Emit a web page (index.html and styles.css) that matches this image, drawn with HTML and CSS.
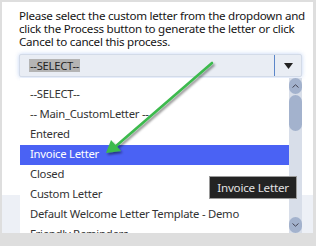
FILE: index.html
```html
<!DOCTYPE html>
<html>
<head>
<meta charset="utf-8">
<link rel="stylesheet" href="styles.css">
</head>
<body>
<div class="panel">
  <div class="content">
    <p class="msg">Please select the custom letter from the dropdown and click the Process button to generate the letter or click Cancel to cancel this process.</p>
    <div class="select">
      <span class="value">--SELECT--</span>
      <span class="btn"><svg width="9" height="6" viewBox="0 0 9 6"><path d="M0 0 H9 L4.5 6 Z" fill="#222"/></svg></span>
    </div>
  </div>
  <div class="footer"></div>

  <div class="list">
    <ul class="options">
      <li>--SELECT--</li>
      <li>-- Main_CustomLetter --</li>
      <li>Entered</li>
      <li class="active">Invoice Letter</li>
      <li>Closed</li>
      <li>Custom Letter</li>
      <li>Default Welcome Letter Template - Demo</li>
      <li>Friendly Reminders</li>
    </ul>
    <div class="scroll">
      <span class="sbtn up"><svg width="7" height="4" viewBox="0 0 7 4"><path d="M0.5 3.5 L3.5 0.8 L6.5 3.5" fill="none" stroke="#445" stroke-width="1"/></svg></span>
      <span class="thumb"></span>
      <span class="track"></span>
      <span class="sbtn down"><svg width="7" height="4" viewBox="0 0 7 4"><path d="M0.5 0.5 L3.5 3.2 L6.5 0.5" fill="none" stroke="#445" stroke-width="1"/></svg></span>
    </div>
  </div>

  <div class="tooltip">Invoice Letter</div>

  <svg class="arrow" width="316" height="246" viewBox="0 0 316 246">
    <defs>
      <filter id="sh" x="-20%" y="-20%" width="140%" height="140%">
        <feDropShadow dx="1.5" dy="2" stdDeviation="1.2" flood-color="#000" flood-opacity="0.45"/>
      </filter>
    </defs>
    <g filter="url(#sh)" stroke="#3dba4e" fill="#3dba4e">
      <line x1="212" y1="63" x2="116" y2="146" stroke-width="2.6" stroke-linecap="round"/>
      <path d="M106 153 L111 140 L121 151 Z" stroke="none"/>
    </g>
  </svg>
</div>
<div class="bottom"></div>
</body>
</html>
```
FILE: styles.css
```css
html, body {
  margin: 0;
  padding: 0;
}
body {
  width: 316px;
  height: 246px;
  background: #dedede;
  font-family: "Noto Sans", "Open Sans", sans-serif;
  overflow: hidden;
  position: relative;
}
.panel {
  position: relative;
  margin: 2px 0 0 2px;
  width: 311px;
  height: 231px;
  display: flex;
  flex-direction: column;
  background: #fff;
}
.content {
  height: 193px;
  background: #fff;
}
.footer {
  flex: 1;
  background: #edf0f6;
}
.msg {
  margin: 0;
  padding: 7px 8px 0 17px;
  font-size: 11.6px;
  letter-spacing: -0.25px;
  line-height: 13px;
  color: #151515;
}
.select {
  margin: 6px 0 0 17px;
  width: 281px;
  height: 21px;
  border: 1px solid #d3dbe8;
  border-radius: 2px;
  background: #e9edf4;
  box-shadow: 0 0 4px rgba(120, 160, 230, 0.45);
  display: flex;
  align-items: center;
}
.value {
  margin-left: 9px;
  background: #b4b4b4;
  color: #222;
  font-size: 11.2px;
  letter-spacing: -0.25px;
  line-height: 13px;
  padding: 0 1px;
}
.btn {
  margin-left: auto;
  width: 26px;
  height: 21px;
  border-left: 1px solid #5b86c9;
  display: flex;
  align-items: center;
  justify-content: center;
}
.list {
  position: absolute;
  left: 18px;
  top: 76px;
  width: 282px;
  height: 155px;
  display: flex;
  background: #fff;
  overflow: hidden;
}
.options {
  list-style: none;
  margin: 0;
  padding: 7px 0 0 0;
  width: 269px;
}
.options li {
  height: 20px;
  line-height: 18px;
  padding: 0 0 2px 10px;
  box-sizing: border-box;
  font-size: 11.3px;
  letter-spacing: -0.25px;
  color: #333;
  white-space: nowrap;
}
.options li.active {
  background: #4a62f4;
  color: #fff;
}
.scroll {
  width: 13px;
  background: #d8dee9;
  display: flex;
  flex-direction: column;
  align-items: center;
}
.sbtn {
  width: 13px;
  height: 16px;
  border-radius: 7px;
  background: #a3b2cd;
  display: flex;
  align-items: center;
  justify-content: center;
  flex: none;
}
.thumb {
  margin-top: 1px;
  width: 13px;
  height: 36px;
  border-radius: 7px;
  background: #a3b2cd;
  flex: none;
}
.track {
  flex: 1;
}
.tooltip {
  position: absolute;
  left: 207px;
  top: 174px;
  width: 86px;
  height: 21px;
  border: 1px solid #9a9a9a;
  background: #232323;
  color: #e2e2e2;
  font-size: 11.6px;
  letter-spacing: -0.2px;
  line-height: 21px;
  text-align: center;
}
.arrow {
  position: absolute;
  left: -2px;
  top: -2px;
  pointer-events: none;
}
.bottom {
  height: 13px;
}
```
